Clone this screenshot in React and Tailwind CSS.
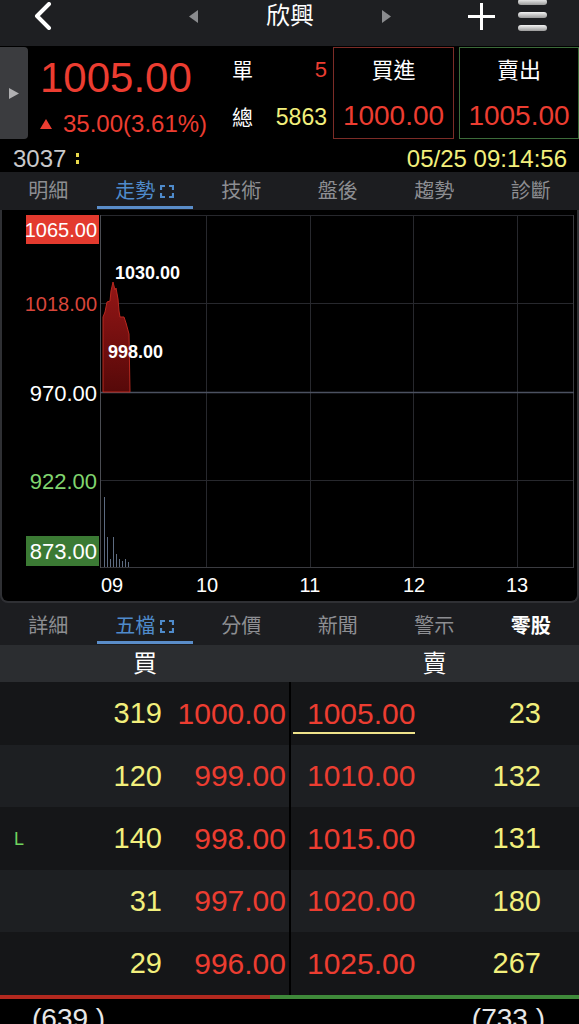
import React from 'react';

const RED = 'text-[#ec3d31]';
const YEL = 'text-[#f2ef7c]';

const Expand = ({ className }) => (
  <svg width="14" height="13" viewBox="0 0 14 13" className={className} fill="none" stroke="currentColor" strokeWidth="2.2">
    <path d="M1 5V1h4M9 1h4v4M13 8v4H9M5 12H1V8" />
  </svg>
);

const TopBar = () => (
  <div className="h-[46px] bg-[#1e1f22] flex items-start">
    <div className="h-[32px] flex items-center w-full">
      <svg width="20" height="28" viewBox="0 0 20 28" className="ml-[33px]">
        <path d="M16 2L4 14l12 12" fill="none" stroke="#fff" strokeWidth="4" strokeLinecap="round" strokeLinejoin="round" />
      </svg>
      <svg width="9" height="13" viewBox="0 0 9 13" className="ml-[136px]">
        <path d="M9 0v13L0 6.5z" fill="#8a8b8e" />
      </svg>
      <div className="ml-[68px] w-[48px] text-[24px] leading-none text-white">欣興</div>
      <svg width="9" height="13" viewBox="0 0 9 13" className="ml-[68px]">
        <path d="M0 0v13l9-6.5z" fill="#8a8b8e" />
      </svg>
      <svg width="29" height="29" viewBox="0 0 29 29" className="ml-[76px]">
        <path d="M14.5 1v27M1 14.5h27" stroke="#fff" strokeWidth="3" />
      </svg>
      <div className="ml-[22px] w-[29px] flex flex-col gap-[7px] -mt-[2px]">
        <div className="h-[6px] rounded-full bg-gradient-to-b from-[#f4f4f4] to-[#9a9a9a]" />
        <div className="h-[6px] rounded-full bg-gradient-to-b from-[#f4f4f4] to-[#9a9a9a]" />
        <div className="h-[6px] rounded-full bg-gradient-to-b from-[#f4f4f4] to-[#9a9a9a]" />
      </div>
    </div>
  </div>
);

const Quote = () => (
  <div className="bg-black">
    <div className="h-[99px] flex items-start">
      <div className="mt-[1px] h-[92px] w-[28px] rounded-r-[4px] bg-[#3b3c3f] flex items-center justify-center">
        <svg width="10" height="11" viewBox="0 0 10 11"><path d="M0 0v11l10-5.5z" fill="#b0b0b2" /></svg>
      </div>
      <div className="ml-[12px] w-[192px] flex flex-col">
        <div className={`mt-[11px] text-[42px] leading-none ${RED}`}>1005.00</div>
        <div className={`mt-[13px] flex items-center text-[24px] leading-none ${RED}`}>
          <svg width="12" height="10" viewBox="0 0 12 10" className="mr-[11px]"><path d="M6 0l6 10H0z" fill="#ec3d31" /></svg>
          35.00(3.61%)
        </div>
      </div>
      <div className="w-[95px] flex flex-col mt-[12px]">
        <div className="h-[24px] flex items-center justify-between">
          <span className="text-[21px] text-white leading-none">單</span>
          <span className={`text-[22px] leading-none ${RED}`}>5</span>
        </div>
        <div className="h-[24px] mt-[23px] flex items-center justify-between">
          <span className="text-[21px] text-white leading-none">總</span>
          <span className={`text-[23px] leading-none ${YEL}`}>5863</span>
        </div>
      </div>
      <div className="ml-[6px] mt-[1px] w-[121px] h-[92px] border border-[#7c2c27] flex flex-col items-center">
        <div className="mt-[12px] text-[22px] leading-none text-white">買進</div>
        <div className={`mt-[20px] text-[28px] leading-none ${RED}`}>1000.00</div>
      </div>
      <div className="ml-[5px] mt-[1px] w-[120px] h-[92px] border border-[#3c6b3a] flex flex-col items-center">
        <div className="mt-[12px] text-[22px] leading-none text-white">賣出</div>
        <div className={`mt-[20px] text-[28px] leading-none ${RED}`}>1005.00</div>
      </div>
    </div>
    <div className="h-[27px] flex items-center justify-between pl-[13px] pr-[12px]">
      <div className="flex items-center">
        <span className="text-[24px] leading-none text-[#c9c9cb]">3037</span>
        <span className="ml-[10px] flex flex-col gap-[3px]">
          <span className="block w-[3px] h-[4px] bg-[#e8d84a]" />
          <span className="block w-[3px] h-[4px] bg-[#e8d84a]" />
        </span>
      </div>
      <span className={`text-[24px] leading-none ${YEL}`}>05/25 09:14:56</span>
    </div>
  </div>
);

const Tabs = ({ items, active, bright }) => (
  <div className="h-[38px] bg-[#1c1d20] grid grid-cols-6">
    {items.map((t, i) => (
      <div key={t} className="relative flex items-center justify-center">
        <span
          className={`text-[20px] leading-none ${
            i === active ? 'text-[#4f8bcb]' : i === bright ? 'text-white font-bold' : 'text-[#8d8e92]'
          }`}
        >
          {t}
        </span>
        {i === active && <Expand className="ml-[5px] text-[#4f8bcb]" />}
        {i === active && <div className="absolute left-0 right-0 bottom-[1px] h-[3px] bg-[#5a8dc9]" />}
      </div>
    ))}
  </div>
);

const vols = [
  [104.5, 498], [107.5, 538], [110.5, 560], [113.5, 538], [116.5, 555], [119.5, 560],
  [122.5, 562], [125.5, 560], [128.5, 563],
];

const Chart = () => (
  <div className="relative h-[397px] bg-[#1c1d20]">
    <div className="h-[393px] bg-black rounded-b-[8px] border-x-2 border-b-2 border-[#2f3034]" />
    <svg width="579" height="397" viewBox="0 211 579 397" className="absolute top-0 left-0" fontFamily="Liberation Sans, sans-serif">
      <defs>
        <linearGradient id="ar" x1="0" y1="0" x2="0" y2="1">
          <stop offset="0" stopColor="#951616" />
          <stop offset="1" stopColor="#560909" />
        </linearGradient>
      </defs>
      <g stroke="#27282d" strokeWidth="1">
        {[206.5, 310.5, 413.5, 517.5].map((x) => (
          <line key={x} x1={x} y1="216" x2={x} y2="569" />
        ))}
        <line x1="100" y1="216.5" x2="574" y2="216.5" />
        <line x1="100" y1="304.5" x2="574" y2="304.5" />
        <line x1="100" y1="481.5" x2="574" y2="481.5" />
      </g>
      <line x1="573.5" y1="216" x2="573.5" y2="569" stroke="#3a3b40" />
      <line x1="100" y1="568.5" x2="574" y2="568.5" stroke="#3a3b40" />
      <line x1="100.5" y1="216" x2="100.5" y2="569" stroke="#4a4c52" />
      <line x1="100" y1="393.5" x2="574" y2="393.5" stroke="#4b5160" strokeWidth="1.5" />
      <path
        d="M103 393 L103 318 L105 313 L107 303 L110 302 L111 292 L113 283 L115 291 L116 289 L118 300 L119 312 L120 318 L124 318 L126 324 L129 335 L130 393 Z"
        fill="url(#ar)"
        stroke="#b8281f"
        strokeWidth="1"
      />
      {vols.map(([x, y]) => (
        <line key={x} x1={x} y1={y} x2={x} y2="568" stroke="#5d6b80" strokeWidth="1" />
      ))}
      <rect x="26" y="216" width="73" height="29" fill="#e33a2e" />
      <text x="97" y="238" textAnchor="end" fontSize="20" fill="#fff">1065.00</text>
      <text x="97" y="312" textAnchor="end" fontSize="20" fill="#d8463b">1018.00</text>
      <text x="97" y="402" textAnchor="end" fontSize="22" fill="#fff">970.00</text>
      <text x="97" y="490" textAnchor="end" fontSize="22" fill="#80d56f">922.00</text>
      <rect x="26" y="537" width="73" height="30" fill="#3b7a34" />
      <text x="97" y="560" textAnchor="end" fontSize="22" fill="#fff">873.00</text>
      <text x="115" y="280" fontSize="18" fontWeight="bold" fill="#fff">1030.00</text>
      <text x="108" y="359" fontSize="18" fontWeight="bold" fill="#fff">998.00</text>
      {[['09', 112], ['10', 207], ['11', 310], ['12', 414], ['13', 517]].map(([t, x]) => (
        <text key={t} x={x} y="593" textAnchor="middle" fontSize="20" fill="#fff">{t}</text>
      ))}
    </svg>
  </div>
);

const rows = [
  { bq: '319', bp: '1000.00', sp: '1005.00', sq: '23', h: 'h-[63px]', bg: 'bg-[#151618]', line: true },
  { bq: '120', bp: '999.00', sp: '1010.00', sq: '132', h: 'h-[62px]', bg: 'bg-[#1d1f22]' },
  { bq: '140', bp: '998.00', sp: '1015.00', sq: '131', h: 'h-[63px]', bg: 'bg-[#151618]', mark: 'L' },
  { bq: '31', bp: '997.00', sp: '1020.00', sq: '180', h: 'h-[62px]', bg: 'bg-[#1d1f22]' },
  { bq: '29', bp: '996.00', sp: '1025.00', sq: '267', h: 'h-[63px]', bg: 'bg-[#151618]' },
];

const Book = () => (
  <div>
    <div className="h-[37px] bg-[#2b2d30] flex items-center">
      <div className="w-[290px] text-center text-[24px] leading-none text-white">買</div>
      <div className="flex-1 text-center text-[24px] leading-none text-white">賣</div>
    </div>
    {rows.map((r) => (
      <div key={r.bq} className={`${r.h} ${r.bg} flex relative`}>
        <div className="w-[289px] flex items-center text-[29px] leading-none">
          <div className="w-[162px] pl-[14px] flex items-center justify-between">
            <span className="text-[18px] text-[#6fd35e]">{r.mark || ''}</span>
            <span className={YEL}>{r.bq}</span>
          </div>
          <div className={`w-[124px] text-right text-[30px] ${RED}`}>{r.bp}</div>
        </div>
        <div className="w-[2px] bg-black" />
        <div className="flex-1 flex items-center justify-between pl-[16px] pr-[38px] text-[29px] leading-none relative">
          <span className={`text-[30px] ${RED}`}>{r.sp}</span>
          <span className={YEL}>{r.sq}</span>
          {r.line && <div className="absolute left-[2px] top-[50px] w-[122px] h-[2px] bg-[#eee28a]" />}
        </div>
      </div>
    ))}
    <div className="flex h-[4px]">
      <div className="w-[270px] bg-[#b3291f]" />
      <div className="flex-1 bg-[#3f8a3a]" />
    </div>
    <div className="h-[25px] bg-black overflow-hidden flex justify-between pl-[32px] pr-[34px] text-[28px] leading-none text-[#e8e8e8]">
      <span className="mt-[6px]">(639 )</span>
      <span className="mt-[6px]">(733 )</span>
    </div>
  </div>
);

export default function App() {
  return (
    <div className="w-[579px] h-[1024px] overflow-hidden bg-black font-['Liberation_Sans','Noto_Sans_CJK_TC',sans-serif]">
      <TopBar />
      <Quote />
      <Tabs items={['明細', '走勢', '技術', '盤後', '趨勢', '診斷']} active={1} />
      <Chart />
      <Tabs items={['詳細', '五檔', '分價', '新聞', '警示', '零股']} active={1} bright={5} />
      <Book />
    </div>
  );
}
